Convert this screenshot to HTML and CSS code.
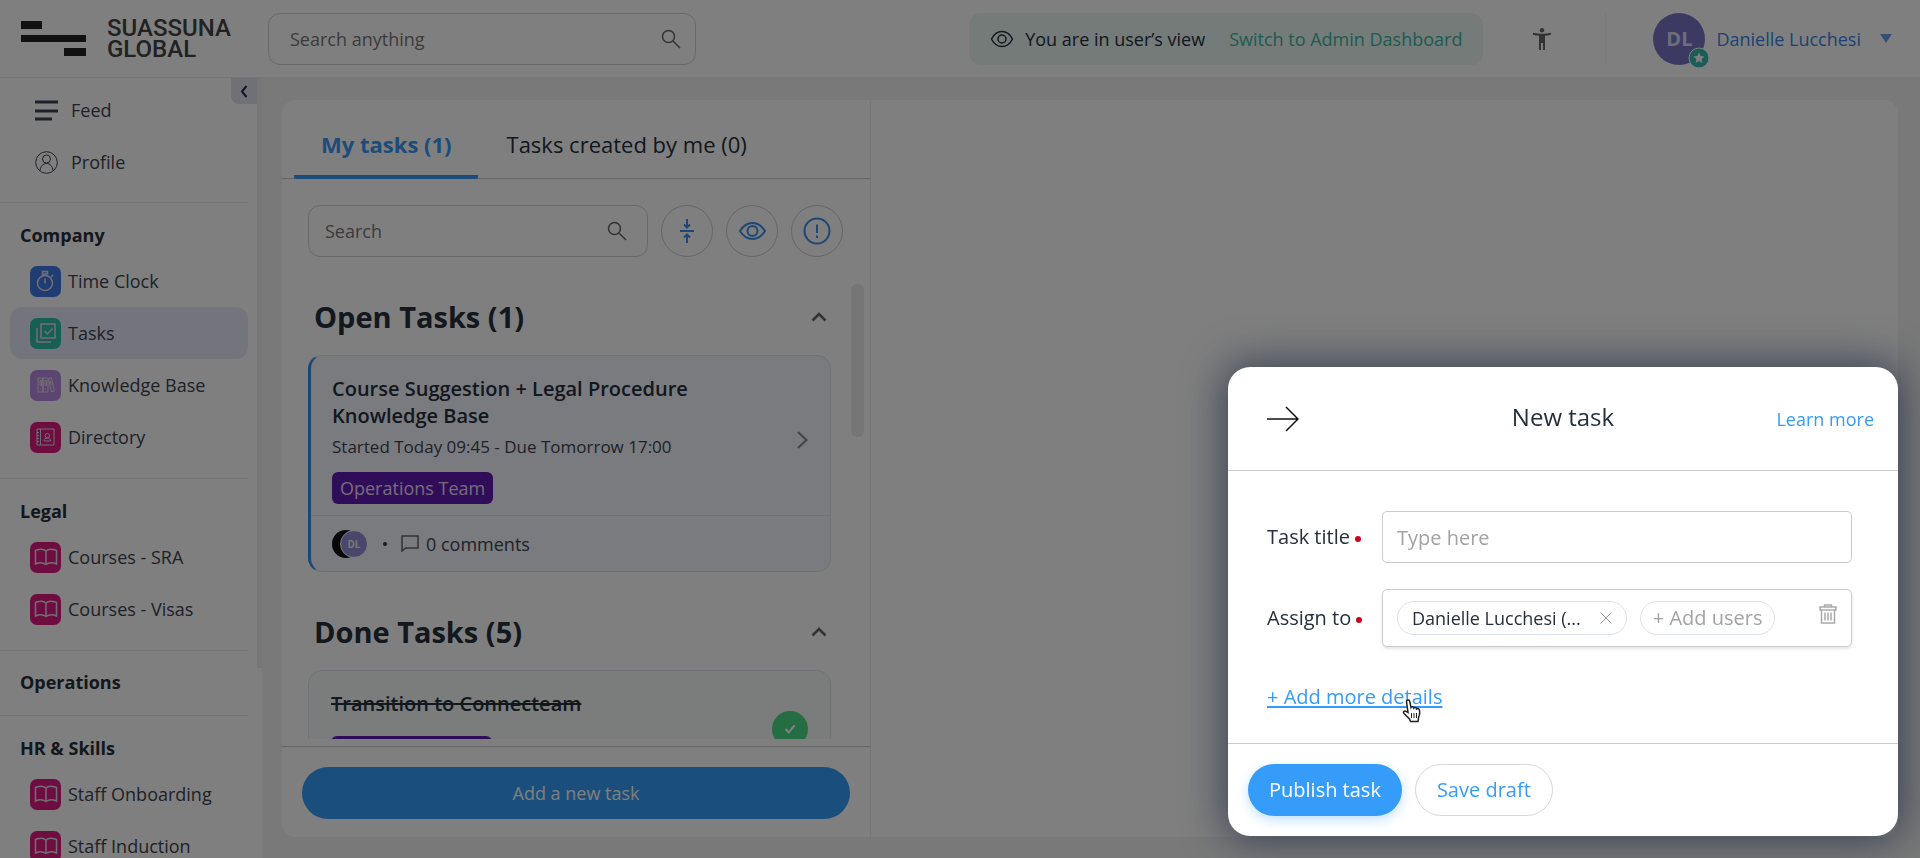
FILE: index.html
```
<!DOCTYPE html>
<html lang="en">
<head>
    <meta charset="UTF-8">
    <meta name="viewport" content="width=device-width, initial-scale=1.0">
    <title>Tasks - Suassuna Global</title>
    <link rel="stylesheet" href="styles.css">
</head>
<body>
    <!-- shared icons -->
    <svg class="sprite" width="0" height="0" aria-hidden="true">
        <symbol id="icon-search" viewBox="0 0 20 20">
            <circle cx="7.500" cy="7.500" r="6"/>
            <path d="M12 12l7 7"/>
        </symbol>
        <symbol id="icon-book" viewBox="0 0 24 18">
            <path d="M12 3C10 1 6 1 3.500 1.800L1.500 2.500V16C4.500 14.500 9 14.300 12 16.500C15 14.300 19.500 14.500 22.500 16V2.500L20.500 1.800C18 1 14 1 12 3zM12 3v13.500"/>
        </symbol>
        <symbol id="icon-up" viewBox="0 0 16 10">
            <path d="M1.500 8.500L8 2l6.500 6.500"/>
        </symbol>
    </svg>

    <div class="app">
        <header class="topbar">
            <a class="logo" href="#">
                <svg width="65" height="35" viewBox="0 0 65 35"><path d="M0 0h21v8H0zM0 14h65v7H0zM43 27h22v8H43z"/></svg>
                <span>SUASSUNA<br>GLOBAL</span>
            </a>
            <div class="search search-global">
                <input type="text" placeholder="Search anything" aria-label="Search anything">
                <svg class="icon" width="20" height="20"><use href="#icon-search"/></svg>
            </div>
            <div class="topbar-right">
                <div class="view-banner">
                    <svg class="icon" width="24" height="18" viewBox="0 0 24 18"><path d="M1.500 9C4 4 7.500 1.500 12 1.500S20 4 22.500 9C20 14 16.500 16.500 12 16.500S4 14 1.500 9z"/><circle cx="12" cy="9" r="4"/></svg>
                    <span>You are in user’s view</span>
                    <a href="#">Switch to Admin Dashboard</a>
                </div>
                <button class="a11y" aria-label="Accessibility">
                    <svg width="18" height="22" viewBox="0 0 18 22"><circle cx="9" cy="2.200" r="2.200"/><path d="M0 4.800Q9 6.800 18 4.800V6.800Q14.500 7.600 12 7.800V22H10V15H8V22H6V7.800Q3.500 7.600 0 6.800z"/></svg>
                </button>
                <button class="user">
                    <span class="avatar">DL
                        <svg class="avatar-badge" width="22" height="22" viewBox="0 0 22 22"><circle cx="11" cy="11" r="10"/><path d="M11 5.500l1.600 3.600 3.900.400-2.900 2.600.800 3.900-3.400-2-3.400 2 .800-3.900-2.900-2.600 3.900-.400z"/></svg>
                    </span>
                    <span>Danielle Lucchesi</span>
                    <svg class="caret" width="12" height="9" viewBox="0 0 12 9"><path d="M0 0h12L6 9z"/></svg>
                </button>
            </div>
        </header>

        <div class="main">
            <nav class="sidebar">
                <button class="collapse" aria-label="Collapse menu">
                    <svg width="8" height="13" viewBox="0 0 8 13"><path d="M6.500 1L2 6.500l4.500 5.500"/></svg>
                </button>
                <ul class="nav-list nav-top">
                    <li><a href="#"><svg class="line-icon" width="23" height="22" viewBox="0 0 23 22"><path d="M0 3h23M0 12h23M0 20h17"/></svg>Feed</a></li>
                    <li><a href="#"><svg class="line-icon thin" width="23" height="23" viewBox="0 0 23 23"><circle cx="11.500" cy="11.500" r="10.800"/><circle cx="11.500" cy="8" r="4"/><path d="M5 19.500C5.500 15 8 12.500 11.500 12.500S17.500 15 18 19.500"/></svg>Profile</a></li>
                </ul>
                <section class="nav-section">
                    <h2>Company</h2>
                    <ul class="nav-list">
                        <li><a href="#"><span class="tile blue"><svg width="20" height="22" viewBox="0 0 20 22"><circle cx="9" cy="13" r="7.500"/><path d="M9 13V8.500M6.500 1.500h5v2.500h-5zM15 7l2-2M9 11v2.500"/></svg></span>Time Clock</a></li>
                        <li><a href="#" class="active"><span class="tile teal"><svg width="20" height="20" viewBox="0 0 20 20"><path d="M5 1h14v14H5zM1 5v14h14M8.500 8l3 3 5-5.500"/></svg></span>Tasks</a></li>
                        <li><a href="#"><span class="tile lilac"><svg class="fine" width="18" height="16" viewBox="0 0 18 16"><path d="M1 1h5v14H1zM6 1h5v14H6zM11.500 1.500l3-.700L17.300 14l-3 .700zM3 3.500v5h1.500v-5zM8 3.500v5h1.500v-5zM13.300 3.500l1 4.500M3.500 12h.5M8.500 12h.5"/></svg></span>Knowledge Base</a></li>
                        <li><a href="#"><span class="tile pink"><svg class="fine" width="19" height="18" viewBox="0 0 19 18"><path d="M1 1h17v16H1zM4.500 1v16M1 4.500h2M1 7.500h2M1 10.500h2M1 13.500h2M8 13c0-2 1.500-3 3.300-3s3.300 1 3.300 3z"/><circle cx="11.300" cy="7.800" r="2.200"/></svg></span>Directory</a></li>
                    </ul>
                </section>
                <section class="nav-section">
                    <h2>Legal</h2>
                    <ul class="nav-list">
                        <li><a href="#"><span class="tile pink"><svg width="24" height="18"><use href="#icon-book"/></svg></span>Courses - SRA</a></li>
                        <li><a href="#"><span class="tile pink"><svg width="24" height="18"><use href="#icon-book"/></svg></span>Courses - Visas</a></li>
                    </ul>
                </section>
                <section class="nav-section closed">
                    <h2>Operations</h2>
                </section>
                <section class="nav-section">
                    <h2>HR &amp; Skills</h2>
                    <ul class="nav-list">
                        <li><a href="#"><span class="tile pink"><svg width="24" height="18"><use href="#icon-book"/></svg></span>Staff Onboarding</a></li>
                        <li><a href="#"><span class="tile pink"><svg width="24" height="18"><use href="#icon-book"/></svg></span>Staff Induction</a></li>
                    </ul>
                </section>
            </nav>

            <main class="content">
                <section class="tasks">
                    <div class="tabs" role="tablist">
                        <button class="tab active" role="tab">My tasks (1)</button>
                        <button class="tab" role="tab">Tasks created by me (0)</button>
                    </div>
                    <div class="toolbar">
                        <div class="search">
                            <input type="text" placeholder="Search" aria-label="Search tasks">
                            <svg class="icon" width="20" height="20"><use href="#icon-search"/></svg>
                        </div>
                        <button class="round" aria-label="Collapse all"><svg width="14" height="24" viewBox="0 0 14 24"><path d="M0 12h14M7 0v8M4 5.500l3 3 3-3M7 24v-8M4 18.500l3-3 3 3"/></svg></button>
                        <button class="round" aria-label="View"><svg width="27" height="18" viewBox="0 0 27 18"><path d="M1 9C4.500 3.500 8.500 1 13.500 1S22.500 3.500 26 9C22.500 14.500 18.500 17 13.500 17S4.500 14.500 1 9z"/><circle cx="13.500" cy="9" r="5"/></svg></button>
                        <button class="round" aria-label="Important"><svg width="28" height="28" viewBox="0 0 28 28"><circle cx="14" cy="14" r="12.500"/><path d="M14 7.500v8.500M14 18.500v2.500"/></svg></button>
                    </div>
                    <div class="task-list">
                        <button class="group-title"><span>Open Tasks (1)</span><svg width="16" height="10"><use href="#icon-up"/></svg></button>
                        <article class="card open">
                            <div class="card-body">
                                <div>
                                    <h3>Course Suggestion + Legal Procedure Knowledge Base</h3>
                                    <p>Started Today 09:45 - Due Tomorrow 17:00</p>
                                    <span class="tag">Operations Team</span>
                                </div>
                                <svg class="chevron" width="11" height="18" viewBox="0 0 11 18"><path d="M1 1l8.500 8L1 17"/></svg>
                            </div>
                            <div class="card-foot">
                                <span class="faces"><span class="face photo"></span><span class="face">DL</span></span>
                                <span class="dot"></span>
                                <svg width="18" height="17" viewBox="0 0 18 17"><path d="M1 1h16v12H4.500L1 16z"/></svg>
                                <span>0 comments</span>
                            </div>
                        </article>
                        <button class="group-title"><span>Done Tasks (5)</span><svg width="16" height="10"><use href="#icon-up"/></svg></button>
                        <article class="card done">
                            <div class="card-body">
                                <div>
                                    <h3>Transition to Connecteam</h3>
                                    <span class="tag">Operations Team</span>
                                </div>
                                <span class="check"><svg width="12" height="10" viewBox="0 0 12 10"><path d="M1.500 5l3.200 3.500L10.500 1.500"/></svg></span>
                            </div>
                        </article>
                    </div>
                    <div class="tasks-foot">
                        <button class="btn-primary btn-wide">Add a new task</button>
                    </div>
                </section>
            </main>
        </div>
    </div>

    <div class="overlay"></div>

    <form class="modal" role="dialog" aria-labelledby="modalTitle">
        <div class="modal-head">
            <button type="button" class="close" aria-label="Close">
                <svg width="32" height="26" viewBox="0 0 32 26"><path d="M0 13h31M19 1L31 13 19 25"/></svg>
            </button>
            <h2 id="modalTitle">New task</h2>
            <a href="#">Learn more</a>
        </div>
        <div class="modal-body">
            <div class="field">
                <label for="taskTitle">Task title<i class="required"></i></label>
                <input type="text" id="taskTitle" placeholder="Type here">
            </div>
            <div class="field">
                <label for="addUsers">Assign to<i class="required"></i></label>
                <div class="assign">
                    <span class="chip">Danielle Lucchesi (...
                        <button type="button" aria-label="Remove user"><svg width="12" height="12" viewBox="0 0 12 12"><path d="M0.500 0.500l11 11M11.500 0.500l-11 11"/></svg></button>
                    </span>
                    <button type="button" class="chip add" id="addUsers">+ Add users</button>
                    <button type="button" class="trash" aria-label="Clear users"><svg width="18" height="20" viewBox="0 0 18 20"><path d="M1 3h16v3H1zM5.500 3V1h7v2M2.500 6v13h13V6M6 8.500v8M9 8.500v8M12 8.500v8"/></svg></button>
                </div>
            </div>
            <a class="more" href="#">+ Add more details
                <svg class="pointer" width="20" height="24" viewBox="0 0 20 24"><path d="M4.500 2.500c0-2 3.200-2 3.200 0l1.300 6c.500-1 2.500-.900 2.800.500.700-.900 2.500-.600 2.800.900.800-.700 2.700-.200 2.900 1.400.400 2.500.200 4.700-.8 6.700L16 22.500H8.500L7.500 20 2 14.500c-1.300-1.600.400-3.300 2.200-2.200L6 13.500z"/><path class="fingers" d="M9.500 14v5M12 14v5M14.500 14v5"/></svg>
            </a>
        </div>
        <div class="modal-foot">
            <button type="submit" class="btn-primary">Publish task</button>
            <button type="button" class="btn-outline">Save draft</button>
        </div>
    </form>
</body>
</html>
```
FILE: styles.css
```
* {
    box-sizing: border-box;
}
body {
    font-family: "Open Sans", sans-serif;
    font-size: 18px;
    line-height: 28px;
    color: #262f3d;
    margin: 0;
    background: #f3f3f3;
}
h2, h3, p, ul {
    margin: 0;
    padding: 0;
}
ul {
    list-style: none;
}
a {
    color: inherit;
    text-decoration: none;
}
button, input {
    font: inherit;
    color: inherit;
}
button {
    background: none;
    border: none;
    padding: 0;
    cursor: pointer;
}
svg {
    display: block;
    flex: none;
    fill: none;
    stroke: currentColor;
    stroke-width: 2;
}
.sprite {
    position: absolute;
}
.app {
    display: flex;
    flex-direction: column;
    height: 100vh;
    overflow: hidden;
}

/* top bar */
.topbar {
    display: flex;
    align-items: center;
    flex: none;
    height: 78px;
    padding: 0 28px 0 21px;
    background: #fff;
    border-bottom: 1px solid #ececec;
}
.logo {
    display: flex;
    align-items: center;
    gap: 21px;
    width: 247px;
    font-family: Roboto, sans-serif;
    font-size: 24px;
    font-weight: 500;
    line-height: 21px;
    color: #444;
}
.logo svg {
    fill: #222;
    stroke: none;
}
.search {
    display: flex;
    align-items: center;
    height: 52px;
    padding: 0 20px 0 16px;
    border: 1px solid #d0d0d0;
    border-radius: 12px;
    color: #666;
}
.search svg {
    stroke-width: 1.5;
}
.search input {
    flex: 1;
    min-width: 0;
    border: none;
    outline: none;
    padding: 0;
    background: none;
}
.search input::placeholder {
    color: #777;
    opacity: 1;
}
.search-global {
    width: 428px;
    padding: 0 14px 0 21px;
}
.topbar-right {
    display: flex;
    align-items: center;
    margin-left: auto;
}
.view-banner {
    display: flex;
    align-items: center;
    height: 52px;
    padding: 0 21px;
    background: #e8f7f3;
    border-radius: 12px;
}
.view-banner svg {
    stroke-width: 1.5;
}
.view-banner span {
    margin: 0 24px 0 11px;
}
.view-banner a {
    color: #3bb8a0;
}
.a11y {
    padding: 0 54px 0 50px;
    color: #666;
}
.a11y svg {
    fill: currentColor;
    stroke: none;
}
.user {
    display: flex;
    align-items: center;
    height: 52px;
    padding-left: 47px;
    border-left: 1px solid #f2f2f2;
    color: #3a86e8;
}
.avatar {
    position: relative;
    width: 52px;
    height: 52px;
    margin-right: 11px;
    border-radius: 50%;
    background: #7974c4;
    color: #dcdcf5;
    font-size: 20px;
    font-weight: 700;
    line-height: 52px;
    text-align: center;
}
.avatar-badge {
    position: absolute;
    right: -5px;
    bottom: -4px;
    fill: #35b8ac;
    stroke: #fff;
    stroke-width: 1;
}
.avatar-badge path {
    fill: #fff;
    stroke: none;
}
.caret {
    margin-left: 19px;
    fill: #6b9fe8;
    stroke: none;
}

/* sidebar */
.main {
    display: flex;
    flex: 1;
    min-height: 0;
}
.sidebar {
    position: relative;
    flex: none;
    width: 262px;
    padding: 6px 14px 0 0;
    background: #fff;
    overflow: hidden;
}
.sidebar::after {
    content: "";
    position: absolute;
    top: 0;
    right: 0;
    width: 5px;
    height: 590px;
    background: #eee;
}
.collapse {
    position: absolute;
    top: 0;
    right: 5px;
    display: flex;
    align-items: center;
    justify-content: center;
    width: 26px;
    height: 26px;
    background: #dfe2ec;
    border-radius: 0 0 0 8px;
    color: #1c2a50;
}
.nav-list a {
    display: flex;
    align-items: center;
    gap: 7px;
    height: 52px;
    margin-left: 10px;
    padding-left: 20px;
    border-radius: 12px;
    color: #3c4350;
}
.nav-list a.active {
    background: #e8ebf8;
}
.nav-top {
    padding-bottom: 14px;
}
.nav-top a {
    gap: 13px;
    padding-left: 25px;
}
.line-icon {
    stroke-width: 3;
}
.line-icon.thin {
    stroke-width: 1;
}
.nav-section {
    padding: 18px 0 15px;
    border-top: 1px solid #ececec;
}
.nav-section.closed {
    padding: 17px 0 19px;
}
.nav-section h2 {
    padding-left: 20px;
    font-size: 18px;
    line-height: 28px;
}
.nav-section .nav-list {
    margin-top: 6px;
}
.tile {
    display: flex;
    align-items: center;
    justify-content: center;
    width: 31px;
    height: 31px;
    border-radius: 7px;
    color: #e6dcea;
}
.tile svg {
    stroke-width: 1.5;
}
.tile svg.fine {
    stroke-width: 1;
}
.blue {
    background: #3f7be6;
}
.teal {
    background: #2fbfa9;
}
.lilac {
    background: #b98ae0;
}
.pink {
    background: #db1a80;
}

/* tasks column */
.content {
    flex: 1;
    display: flex;
    min-width: 0;
    margin: 22px 22px 21px 20px;
    background: #fff;
    border-radius: 14px;
}
.tasks {
    display: flex;
    flex-direction: column;
    width: 589px;
    border-right: 1px solid #ececec;
}
.tabs {
    display: flex;
    flex: none;
    gap: 2px;
    height: 79px;
    padding: 0 12px;
    border-bottom: 1px solid #ccc;
}
.tab {
    height: 79px;
    padding: 12px 26px 0 27px;
    border-bottom: 4px solid transparent;
    font-size: 22px;
}
.tab.active {
    border-color: #3a97f5;
    border-radius: 2px;
    color: #3a97f5;
    font-weight: 700;
}
.toolbar {
    display: flex;
    flex: none;
    gap: 13px;
    padding: 26px 27px 27px 26px;
}
.toolbar .search {
    flex: 1;
}
.round {
    display: flex;
    align-items: center;
    justify-content: center;
    width: 52px;
    height: 52px;
    border: 1px solid #ccc;
    border-radius: 50%;
    color: #3a8ee8;
}
.task-list {
    position: relative;
    flex: 1;
    min-height: 0;
    padding: 0 39px 0 26px;
    overflow: hidden;
}
.task-list::after {
    content: "";
    position: absolute;
    top: 0;
    right: 6px;
    width: 13px;
    height: 153px;
    border-radius: 6px;
    background: #ececec;
}
.group-title {
    display: flex;
    align-items: center;
    justify-content: space-between;
    width: 100%;
    height: 71px;
    padding: 0 4px 6px 6px;
    font-size: 29px;
    font-weight: 700;
    line-height: 36px;
    text-align: left;
}
.group-title svg {
    color: #666;
    stroke-width: 2.5;
}
.card {
    border: 1px solid #e2e5ee;
    border-radius: 14px;
}
.card.open {
    margin-bottom: 27px;
    background: #f4f6fd;
    border-left: 3px solid #3a8ee8;
}
.card.done {
    background: #f4faf8;
}
.card-body {
    display: flex;
    align-items: center;
    justify-content: space-between;
    padding: 19px 22px 11px 21px;
}
.card h3 {
    max-width: 440px;
    font-size: 20px;
    font-weight: 600;
    line-height: 27px;
}
.card p {
    margin: 4px 0 11px;
    font-size: 17px;
    color: #3c4350;
}
.tag {
    display: inline-block;
    height: 32px;
    padding: 0 8px;
    border-radius: 6px;
    background: #611bb0;
    color: #ead8f5;
    line-height: 32px;
    vertical-align: top;
}
.chevron {
    color: #888;
}
.card-foot {
    display: flex;
    align-items: center;
    height: 56px;
    padding-left: 21px;
    border-top: 1px solid #e2e5ee;
    color: #3c4350;
}
.card-foot svg {
    margin-right: 7px;
    color: #666;
    stroke-width: 1.5;
}
.faces {
    display: flex;
}
.face {
    width: 28px;
    height: 28px;
    margin-left: -20px;
    border: 1px solid #fff;
    border-radius: 50%;
    background: #918cd6;
    color: #eee;
    font-size: 10px;
    font-weight: 700;
    line-height: 26px;
    text-align: center;
}
.face.photo {
    margin-left: 0;
    border: none;
    background: #111;
}
.dot {
    width: 4px;
    height: 4px;
    margin: 0 14px 0 15px;
    border-radius: 50%;
    background: #262f3d;
}
.card.done .card-body {
    padding-left: 22px;
}
.card.done h3 {
    margin-bottom: 19px;
    text-decoration: line-through;
}
.check {
    display: flex;
    align-items: center;
    justify-content: center;
    width: 36px;
    height: 36px;
    border-radius: 50%;
    background: #4ada86;
    color: #fff;
}
.tasks-foot {
    flex: none;
    margin-top: 7px;
    padding: 20px 20px 18px;
    border-top: 1px solid #ccc;
}

/* buttons */
.btn-primary, .btn-outline {
    height: 52px;
    padding: 0 21px;
    border-radius: 26px;
    font-size: 20px;
}
.btn-primary {
    background: #359cf9;
    color: #fff;
    box-shadow: 0 4px 12px rgba(53, 156, 249, 0.3);
}
.btn-wide {
    width: 100%;
    box-shadow: none;
    font-size: 18px;
}
.btn-outline {
    border: 1px solid #d5d8dd;
    color: #359cf9;
}

/* new task dialog */
.overlay {
    position: fixed;
    inset: 0;
    background: rgba(0, 0, 0, 0.5);
}
.modal {
    position: fixed;
    right: 22px;
    bottom: 22px;
    width: 670px;
    max-width: calc(100% - 44px);
    background: #fff;
    border-radius: 22px;
    box-shadow: 0 0 40px 4px rgba(30, 42, 65, 0.7);
    font-size: 20px;
}
.modal a {
    color: #359cf9;
}
.modal-head {
    display: grid;
    grid-template-columns: 1fr auto 1fr;
    align-items: center;
    height: 104px;
    padding: 0 24px;
    border-bottom: 1px solid #ccc;
}
.modal-head h2 {
    padding-bottom: 4px;
    font-size: 24px;
    font-weight: 400;
}
.modal-head a {
    justify-self: end;
    font-size: 18px;
}
.close {
    justify-self: start;
    margin-left: 15px;
    color: #111;
}
.close svg {
    stroke-width: 1.5;
}
.modal-body {
    padding: 40px 46px 32px 39px;
}
.field {
    display: flex;
    align-items: center;
    margin-bottom: 26px;
}
.field label {
    width: 115px;
}
.required {
    display: inline-block;
    width: 6px;
    height: 6px;
    margin-left: 5px;
    border-radius: 50%;
    background: #d0021b;
    vertical-align: middle;
}
.field input, .assign {
    flex: 1;
    min-width: 0;
    height: 52px;
    padding: 0 14px;
    border: 1px solid #ccc;
    border-radius: 5px;
}
.field input::placeholder {
    color: #a3a3a3;
    opacity: 1;
}
.assign {
    display: flex;
    align-items: center;
    gap: 13px;
    height: 58px;
    box-shadow: 0 2px 3px rgba(0, 0, 0, 0.1);
}
.chip {
    display: flex;
    align-items: center;
    gap: 19px;
    height: 34px;
    padding: 0 14px;
    border: 1px solid #dde2ea;
    border-radius: 17px;
    font-size: 18px;
}
.chip svg {
    color: #999;
    stroke-width: 1;
}
.chip.add {
    padding: 0 12px;
    color: #a3a3a3;
    font-size: 20px;
}
.trash {
    margin-left: auto;
    padding-bottom: 8px;
    color: #aaa;
}
.trash svg {
    stroke-width: 1.5;
}
.more {
    position: relative;
    display: inline-block;
    margin-top: 10px;
    line-height: 27px;
    text-decoration: underline;
    text-decoration-thickness: 2px;
    text-decoration-skip-ink: none;
    text-underline-offset: 2px;
}
.pointer {
    position: absolute;
    right: 20px;
    bottom: -13px;
    fill: #fff;
    stroke: #222;
    stroke-width: 1.5;
}
.fingers {
    stroke-width: 1;
}
.modal-foot {
    display: flex;
    gap: 13px;
    padding: 20px;
    border-top: 1px solid #ccc;
}
```
